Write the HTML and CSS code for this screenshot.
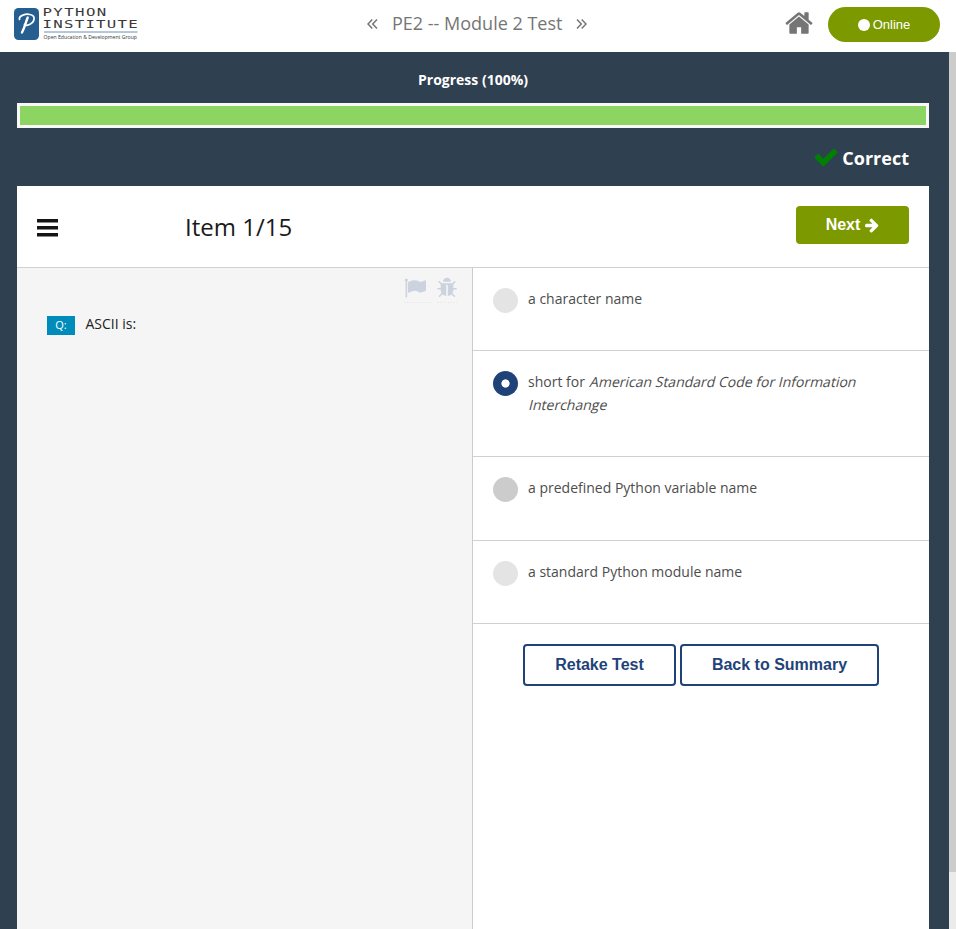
FILE: index.html
```html
<!DOCTYPE html>
<html lang="en">
<head>
<meta charset="utf-8">
<title>PE2 -- Module 2 Test</title>
<link rel="stylesheet" href="styles.css">
</head>
<body>
<header class="topbar">
  <svg class="logo" width="126" height="36" viewBox="0 0 126 36" role="img" aria-label="Python Institute">
    <rect x="0" y="2" width="25" height="32" rx="4.5" fill="#265f8f"/>
    <g fill="none" stroke="#fff" stroke-linecap="round" stroke-linejoin="round">
      <path d="M5.500 13.500C4.500 9.500 12 7.500 16 8.500C22 9.500 21 16 15.500 18.500C13 19.600 11 19.300 10.500 18.500" stroke-width="1.700"/>
      <path d="M13.700 11.500C11.500 17 10.500 22 8 26.500" stroke-width="2.400"/>
    </g>
    <g class="logo-text">
      <text x="0" y="0" transform="translate(28.500 9.900) scale(1.500 1)" textLength="42.500" lengthAdjust="spacing">PYTHON</text>
      <text x="0" y="0" transform="translate(28.500 22.400) scale(1.500 1)" textLength="63.500" lengthAdjust="spacing">INSTITUTE</text>
    </g>
    <path d="M30 26H123.500" stroke="#5684ad" stroke-width=".9"/>
    <text class="logo-tag" x="29.500" y="33" font-size="5.600" textLength="93.500" lengthAdjust="spacingAndGlyphs">Open Education &amp; Development Group</text>
  </svg>
  <nav class="crumb">
    <svg width="11" height="10" viewBox="0 0 11 10"><path d="M5.300 .6L1 5l4.300 4.400M10 .6L5.700 5 10 9.400"/></svg>
    <span class="crumb-title">PE2 -- Module 2 Test</span>
    <svg width="11" height="10" viewBox="0 0 11 10"><path d="M1 .6L5.300 5 1 9.400M5.700 .6L10 5 5.700 9.400"/></svg>
  </nav>
  <div class="tools">
    <svg class="home" viewBox="0 0 1792 1792"><path d="M1472 992v480q0 26-19 45t-45 19h-384v-384h-256v384h-384q-26 0-45-19t-19-45v-480q0-1 .5-3t.5-3l575-474 575 474q1 2 1 6zm223-69l-62 74q-8 9-21 11h-3q-13 0-21-7l-692-577-692 577q-12 8-24 7-13-2-21-11l-62-74q-8-10-7-23.500t11-21.500l719-599q32-26 76-26t76 26l244 204v-195q0-14 9-23t23-9h192q14 0 23 9t9 23v408l219 182q10 8 11 21.500t-7 23.500z"/></svg>
    <div class="online"><i class="dot"></i>Online</div>
  </div>
</header>
<div class="viewport">
  <main class="stage">
    <div class="progress-label">Progress (100%)</div>
    <div class="progress"><div class="progress-fill" style="width:100%"></div></div>
    <div class="result">
      <svg class="check" viewBox="0 0 1792 1792"><path d="M1671 566q0 40-28 68l-724 724-136 136q-28 28-68 28t-68-28l-136-136-362-362q-28-28-28-68t28-68l136-136q28-28 68-28t68 28l294 295 656-657q28-28 68-28t68 28l136 136q28 28 28 68z"/></svg>
      <span>Correct</span>
    </div>
    <section class="card">
      <div class="card-head">
        <svg class="menu" width="21" height="18" viewBox="0 0 21 18"><path d="M0 0h21v3.500H0zM0 7h21v3.500H0zM0 14h21v3.500H0z"/></svg>
        <h1 class="item-title">Item 1/15</h1>
        <button class="next">Next<svg viewBox="0 0 1792 1792"><path d="M1600 960q0 54-37 91l-651 651q-39 37-91 37-51 0-90-37l-75-75q-38-38-38-91t38-91l293-293h-704q-52 0-84.500-37.500t-32.500-90.500v-128q0-53 32.500-90.500t84.500-37.500h704l-293-294q-38-36-38-90t38-90l75-75q38-38 90-38 53 0 91 38l651 651q37 35 37 90z"/></svg></button>
      </div>
      <div class="columns">
        <div class="question">
          <div class="actions">
            <span class="action flag"><svg viewBox="0 0 1792 1792"><path d="M320 256q0 72-64 110v1266q0 13-9.500 22.500t-22.500 9.500h-64q-13 0-22.500-9.500t-9.500-22.500v-1266q-64-38-64-110 0-53 37.500-90.500t90.500-37.500 90.500 37.500 37.500 90.500zm1472 64v763q0 25-12.500 38.500t-39.500 27.500q-215 116-369 116-61 0-123.500-22t-108.500-48-115.500-48-142.500-22q-192 0-464 146-17 9-33 9-26 0-45-19t-19-45v-742q0-32 31-55 21-14 79-43 236-120 421-120 107 0 200 29t219 88q38 19 88 19 54 0 117.500-21t110-47 88-47 54.500-21q26 0 45 19t19 45z"/></svg></span>
            <span class="action bug"><svg viewBox="0 0 1792 1792"><path d="M1696 960q0 26-19 45t-45 19h-224q0 171-67 290l208 209q19 19 19 45t-19 45q-18 19-45 19t-45-19l-198-197q-5 5-15 13t-42 28.500-65 36.500-82 29-97 13v-896h-128v896q-51 0-101.500-13.500t-87-33-66-39-43.500-32.500l-15-14-183 207q-20 21-48 21-24 0-43-16-19-18-20.500-44.500t15.500-46.500l202-227q-58-114-58-274h-224q-26 0-45-19t-19-45 19-45 45-19h224v-294l-173-173q-19-19-19-45t19-45 45-19 45 19l173 173h844l173-173q19-19 45-19t45 19 19 45-19 45l-173 173v294h224q26 0 45 19t19 45zm-480-576h-640q0-133 93.500-226.500t226.500-93.500 226.500 93.500 93.500 226.500z"/></svg></span>
          </div>
          <div class="prompt"><span class="badge">Q:</span><span class="prompt-text">ASCII is:</span></div>
        </div>
        <div class="answers">
          <div class="answer"><i class="radio"></i><p>a character name</p></div>
          <div class="answer two-line"><i class="radio selected"></i><p>short for <em>American Standard Code for Information</em> <em>Interchange</em></p></div>
          <div class="answer mid"><i class="radio hovered"></i><p>a predefined Python variable name</p></div>
          <div class="answer"><i class="radio"></i><p>a standard Python module name</p></div>
          <div class="buttons"><button class="outline retake">Retake Test</button><button class="outline summary">Back to Summary</button></div>
        </div>
      </div>
    </section>
  </main>
  <div class="scroll-track"><div class="scroll-thumb"></div></div>
</div>
</body>
</html>
```
FILE: styles.css
```css
* { box-sizing: border-box; }
body {
  margin: 0;
  height: 929px;
  overflow: hidden;
  display: flex;
  flex-direction: column;
  font-family: "Open Sans", "Liberation Sans", sans-serif;
  background: #fff;
}
svg { display: block; flex: none; }
button { font-family: "Liberation Sans", Arial, sans-serif; font-weight: 700; font-size: 16px; padding: 0; }

.topbar {
  height: 52px;
  flex: none;
  display: grid;
  grid-template-columns: 353px 248px 1fr;
  padding: 0 16px 0 14px;
  background: #fff;
}
.logo { margin-top: 6px; overflow: visible; }
.logo-text { font-family: "DejaVu Sans Mono", monospace; font-size: 10.5px; fill: #3a3a3a; }
.logo-tag { font-family: "Open Sans", sans-serif; fill: #333; }
.crumb { display: flex; height: 46px; align-items: center; font-size: 18px; color: #757575; white-space: nowrap; }
.crumb svg { margin-top: 2px; fill: none; stroke: #757575; stroke-width: 1.5px; }
.crumb-title { margin: 0 14px; }
.tools { display: flex; justify-content: flex-end; }
.home { width: 30px; height: 30px; margin: 8px 14px 0 0; fill: #757575; }
.online {
  width: 112px; height: 35px; margin-top: 7px;
  border-radius: 18px;
  background: #7c9a00;
  color: #fff;
  display: flex; align-items: center; justify-content: center;
  font: 13px "Liberation Sans", Arial, sans-serif;
}
.dot { width: 12px; height: 12px; border-radius: 50%; background: #fff; margin-right: 3px; }

.viewport { flex: 1; min-height: 0; display: flex; }
.stage {
  flex: 1;
  display: flex; flex-direction: column;
  padding: 0 20px 0 17px;
  background: #2f4050;
}
.scroll-track { width: 7px; background: #ebebeb; }
.scroll-thumb { height: 820px; background: #ccc; }

.progress-label { height: 51px; padding-top: 18px; text-align: center; color: #fff; font-weight: 700; font-size: 14px; line-height: 20px; }
.progress { height: 25px; padding: 3px; background: #f8f8f8; }
.progress-fill { height: 19px; background: #8dd563; }
.result {
  height: 58px; padding: 0 20px 0 0;
  display: flex; justify-content: flex-end; align-items: flex-start;
  color: #fff; font-weight: 700; font-size: 18px; line-height: 26px;
}
.result span { margin-top: 17px; }
.check { width: 26px; height: 26px; margin: 16px 3px 0 0; fill: #008000; }

.card { flex: 1; min-height: 0; background: #fff; display: flex; flex-direction: column; }
.card-head { height: 82px; flex: none; display: flex; align-items: flex-start; padding: 0 20px; border-bottom: 1px solid #d1d1d1; }
.menu { margin-top: 33px; fill: #151515; }
.item-title { margin: 24px 0 0 127px; font-weight: 400; font-size: 24px; line-height: 34px; color: #1a1a1a; }
.next {
  width: 113px; height: 38px; margin: 20px 0 0 auto;
  border: 0; border-radius: 4px;
  background: #7c9a00; color: #fff;
  display: flex; align-items: center; justify-content: center;
}
.next svg { width: 16px; height: 16px; margin: 0 -1px 0 4px; fill: #fff; }

.columns { flex: 1; min-height: 0; display: grid; grid-template-columns: 456px 1fr; }
.question { background: #f5f5f5; border-right: 1px solid #ccc; }
.actions { display: flex; justify-content: flex-end; padding: 9px 15px 0 0; }
.action { border-bottom: 1px dotted #e6e8ec; height: 26px; }
.action svg { width: 22px; height: 22px; fill: #ccd3df; }
.flag { width: 28px; margin-right: 5px; }
.bug { width: 20px; }
.bug svg { margin-left: -1px; }
.prompt { display: flex; align-items: flex-start; padding: 9px 0 0 30px; margin-top: 1px; font-size: 14px; line-height: 23px; color: #222; }
.badge { width: 28px; height: 19px; margin: 3px 10.5px 0 0; background: #008cba; color: #fff; text-align: center; font-size: 11px; line-height: 18px; }
.prompt-text { margin-top: -1px; }

.answers { background: #fff; }
.answer { height: 83px; padding: 20px 60px 0 20px; display: flex; border-bottom: 1px solid #d1d1cf; font-size: 14px; line-height: 23px; color: #4d4d4d; }
.answer p { margin: -1px 0 0 10px; }
.answer em { display: inline-block; font-style: normal; transform: skewX(-14deg); transform-origin: 50% 75%; }
.two-line { height: 106px; }
.mid { height: 84px; }
.radio { width: 25px; height: 25px; flex: none; border-radius: 50%; background: #e4e4e4; }
.radio.hovered { background: #ccc; }
.radio.selected { background: radial-gradient(circle, #fff 3.7px, #1f4379 4.5px); }
.buttons { display: flex; gap: 4px; padding: 20px 0 0 50px; }
.outline { height: 42px; border: 2px solid #1f4379; border-radius: 4px; background: #fff; color: #1f4379; }
.retake { width: 153px; }
.summary { width: 199px; }
```
